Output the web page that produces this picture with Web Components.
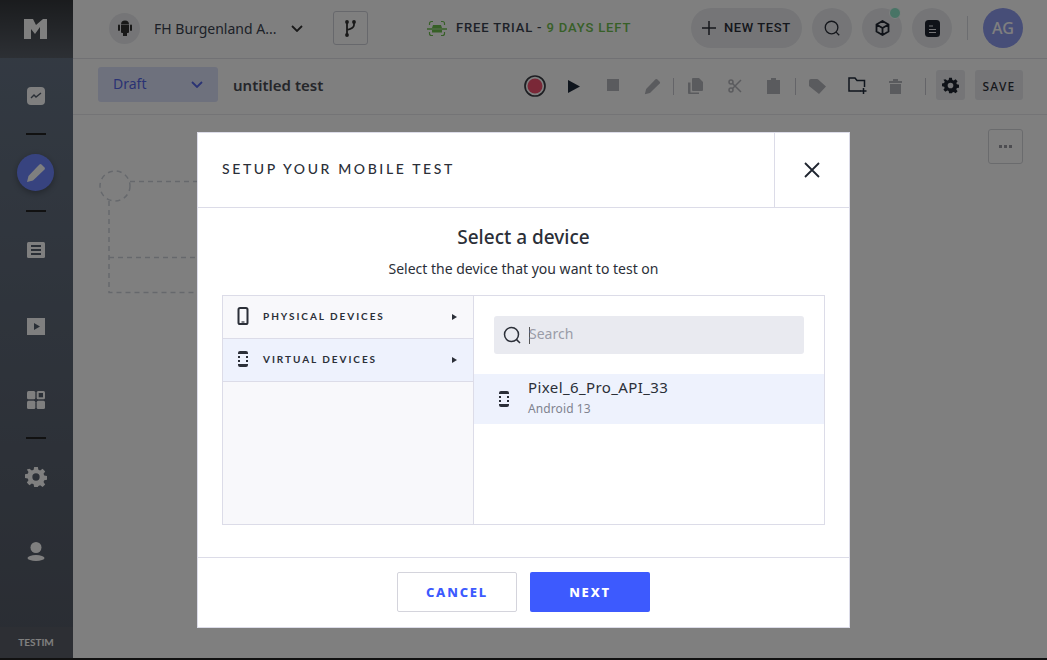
<!DOCTYPE html>
<html>
<head>
<meta charset="utf-8">
<style>
	html, body { margin: 0; height: 100%; overflow: hidden; background: #111; }
	body { font-family: "Lato", "Liberation Sans", sans-serif; }
</style>
</head>
<body>
<app-shell>
	<side-nav slot="nav"></side-nav>
	<top-bar slot="main"></top-bar>
	<test-toolbar slot="main"></test-toolbar>
	<test-canvas slot="main"></test-canvas>
	<setup-modal slot="modal" heading="SETUP YOUR MOBILE TEST">
		<h2-text>Select a device</h2-text>
		<device-picker></device-picker>
	</setup-modal>
</app-shell>

<script>
function define(name, html, connected) {
	customElements.define(name, class extends HTMLElement {
		constructor() {
			super()
			let shadowRoot = this.attachShadow({mode: 'open'})
			let temp = document.createElement("template")
			temp.innerHTML = html
			shadowRoot.appendChild(temp.content.cloneNode(true))
		}
		connectedCallback() {
			if(connected){
				connected.call(this)
			}
		}
	})
}

const PHONE = `<svg width="12" height="18" viewBox="0 0 12 18"><rect x="1.500" y="1" width="9" height="16" rx="1.600" fill="none" stroke="#2b2f38" stroke-width="2"/><rect x="4.500" y="14.400" width="3" height="1.200" fill="#2b2f38"/></svg>`
const VIRTUAL = `<svg width="12" height="18" viewBox="0 0 12 18" fill="#2b2f38"><path d="M1 4V3a2 2 0 0 1 2-2h6a2 2 0 0 1 2 2v1z"/><path d="M1 14v1a2 2 0 0 0 2 2h6a2 2 0 0 0 2-2v-1z"/><rect x="1" y="6" width="2" height="2"/><rect x="9" y="6" width="2" height="2"/><rect x="1" y="10" width="2" height="2"/><rect x="9" y="10" width="2" height="2"/></svg>`
const SEARCH = `<svg width="20" height="20" viewBox="0 0 20 20" fill="none" stroke="#2b2f38" stroke-width="1.500"><circle cx="9.500" cy="9.500" r="7"/><path d="M14.600 14.600l3.400 3.400"/></svg>`
const GEAR = c => `<svg width="22" height="22" viewBox="0 0 24 24" fill="${c}"><path fill-rule="evenodd" d="M10 1h4l.6 3.100 1.900.8L19.200 3.100l2.800 2.800-1.800 2.600.8 1.900 3 .6v4l-3 .6-.8 1.900 1.800 2.600-2.800 2.800-2.700-1.800-1.900.8L14 23h-4l-.6-3.100-1.900-.8-2.700 1.800L2 18.100l1.800-2.600-.8-1.900-3-.6V9l3-.6.8-1.900L2 3.900 4.800 3.100 7.500 4.900l1.900-.8zM12 8a4 4 0 1 0 0 8 4 4 0 0 0 0-8z"/></svg>`

define("app-shell", `
	<style>
		:host { display: flex; width: 1047px; height: 658px; position: relative; background: #fff; overflow: hidden; }
		#main { flex: 1; display: flex; flex-direction: column; min-width: 0; }
		#scrim { position: absolute; inset: 0; background: rgba(0,0,0,.5); display: flex; justify-content: center; align-items: flex-start; padding-top: 132px; box-sizing: border-box; }
	</style>
	<slot name="nav"></slot>
	<div id="main"><slot name="main"></slot></div>
	<div id="scrim"><slot name="modal"></slot></div>
`)

define("side-nav", `
	<style>
		:host { display: flex; flex-direction: column; width: 73px; flex: none; background: linear-gradient(#687688, #545a66); color: #fff; }
		#logo { height: 58px; display: flex; align-items: center; justify-content: center; background: linear-gradient(#35383c, #5a6069); padding-right: 2px; box-sizing: border-box; }
		.item { height: 76px; display: flex; align-items: center; justify-content: center; flex: none; padding-right: 1px; }
		.rule { height: 2px; width: 20px; background: #222; margin: -1px auto 0; flex: none; position: relative; left: -.5px; }
		#pen { width: 37px; height: 37px; margin: -1px 0 0 -1px; border-radius: 50%; background: #6f86ff; display: flex; align-items: center; justify-content: center; box-shadow: 0 2px 6px rgba(0,0,0,.3); }
		#foot { margin-top: auto; height: 30px; display: flex; align-items: center; justify-content: center; font: 700 10px "Lato", sans-serif; color: #fff; background: #5a5e68; padding: 0 1px 1px 0; }
	</style>
	<div id="logo"><svg width="23" height="20" viewBox="0 0 23 20" fill="#fff"><path d="M0 0H9L12 6 19 0H23V20H16V8L11 15 7 10V20H0z"/></svg></div>
	<div class="item"><svg width="18" height="18" viewBox="0 0 18 18"><rect width="18" height="18" rx="4" fill="#fff"/><path d="M4 11l3-3 2 2 5-4" fill="none" stroke="#555f6d" stroke-width="1.400"/></svg></div>
	<div class="rule"></div>
	<div class="item"><div id="pen"><svg width="20" height="20" viewBox="0 0 20 20" fill="#fff"><path d="M1 19l1.500-6L11 4l2.500-2.500a1.500 1.500 0 0 1 2 0l3 3a1.500 1.500 0 0 1 0 2L7 17.500z"/></svg></div></div>
	<div class="rule"></div>
	<div class="item"><svg width="18" height="16" viewBox="0 0 18 16"><rect width="18" height="16" rx="1.500" fill="#fff"/><path d="M4 4h10M4 8h10M4 12h10" stroke="#555f6d" stroke-width="2"/></svg></div>
	<div class="item"><svg width="18" height="17" viewBox="0 0 18 17"><rect width="18" height="17" fill="#fff"/><path d="M7 5l6 3.500-6 3.500z" fill="#555f6d"/></svg></div>
	<div class="item" style="height:74px;box-sizing:border-box;padding-bottom:3px"><svg width="18" height="18" viewBox="0 0 18 18" fill="#fff"><rect width="8.300" height="8.300" rx="1.500"/><rect y="9.700" width="8.300" height="8.300" rx="1.500"/><rect x="9.700" y="9.700" width="8.300" height="8.300" rx="1.500"/><rect x="9.700" width="8.300" height="8.300" rx="1.500"/><rect x="11.700" y="2" width="4.300" height="4.300" fill="#555f6d"/></svg></div>
	<div class="rule"></div>
	<div class="item">${GEAR("#fff")}</div>
	<div class="item" style="height:72px"><svg width="18" height="19" viewBox="0 0 18 19" fill="#fff"><circle cx="9" cy="5.500" r="5.500"/><ellipse cx="9" cy="16" rx="8.500" ry="3"/></svg></div>
	<div id="foot">TESTIM</div>
`)

define("top-bar", `
	<style>
		:host { display: flex; align-items: center; height: 59px; flex: none; box-sizing: border-box; border-bottom: 1px solid #e3e3e8; background: #fff; padding: 0 0 2px 36px; font-family: "Noto Sans", sans-serif; }
		.round { width: 40px; height: 40px; border-radius: 50%; background: #eaebef; display: flex; align-items: center; justify-content: center; flex: none; position: relative; }
		#android { width: 31px; height: 31px; margin-right: 14px; }
		#org { font-size: 14px; color: #3b4350; width: 137px; white-space: nowrap; }
		#branch { width: 35px; height: 34px; box-sizing: border-box; border: 1px solid #ced0d8; border-radius: 3px; margin-left: 30px; display: flex; align-items: center; justify-content: center; }
		#trial { display: flex; align-items: center; gap: 9px; margin-left: 59px; font: 500 13px "Roboto", sans-serif; letter-spacing: .85px; color: #3b4350; white-space: nowrap; width: 264px; }
		#trial span { margin-top: -1px; }
		#trial b { font-weight: 500; color: #6fc04f; }
		#new { display: flex; align-items: center; gap: 8px; height: 40px; width: 111px; box-sizing: border-box; padding-left: 11px; border-radius: 20px; background: #eaebef; font: 500 13px "Roboto", sans-serif; letter-spacing: .6px; color: #2b2f38; white-space: nowrap; margin-right: 10px; }
		#new span { margin-top: -1px; }
		.round + .round { margin-left: 10px; }
		#dot { position: absolute; top: -1px; right: 1px; width: 10px; height: 10px; border-radius: 50%; background: #90e8cc; border: 1px solid #fff; }
		#sep { width: 1px; height: 24px; background: #d9dae0; margin: 0 15px; }
		#avatar { background: #8f9cf0; color: #fff; font: 500 16px "Noto Sans", sans-serif; }
	</style>
	<div class="round" id="android"><svg width="14" height="16" viewBox="0 0 14 16" fill="#333"><path d="M3 5h8v7a1 1 0 0 1-1 1H9v2.500a1 1 0 0 1-2 0V13H7v2.500a1 1 0 0 1-2 0V13H4a1 1 0 0 1-1-1zM3 4.500a4 4 0 0 1 8 0zM0 5.500a1 1 0 0 1 2 0V10a1 1 0 0 1-2 0zM12 5.500a1 1 0 0 1 2 0V10a1 1 0 0 1-2 0z"/></svg></div>
	<div id="org">FH Burgenland A...</div>
	<svg width="12" height="7" viewBox="0 0 12 7" fill="none" stroke="#333" stroke-width="1.800"><path d="M1 1l5 5 5-5"/></svg>
	<div id="branch"><svg width="11" height="17" viewBox="0 0 11 17" fill="#333" stroke="#333" stroke-width="1.800"><path d="M2 2V15M9 2V5C9 8 6 9 2 10" fill="none"/><circle cx="2" cy="2" r="1"/><circle cx="9" cy="2" r="1"/><circle cx="2" cy="15" r="1"/></svg></div>
	<div id="trial">
		<svg width="20" height="17" viewBox="0 0 20 17" fill="none" stroke="#6fc04f" stroke-width="1.200"><path d="M2.500 5V3.500a2 2 0 0 1 2-2H6M14 1.500h1.500a2 2 0 0 1 2 2V5M2.500 12v1.500a2 2 0 0 0 2 2H6M14 15.500h1.500a2 2 0 0 0 2-2V12"/><path d="M0 9h20" stroke-width="1.500"/><path d="M6 5h8l1 3H5zM5 10h10v2.500H5z" fill="#6fc04f" stroke="none"/></svg>
		<span>FREE TRIAL - <b>9 DAYS LEFT</b></span>
	</div>
	<div id="new"><svg width="14" height="14" viewBox="0 0 14 14" stroke="#2b2f38" stroke-width="1.500"><path d="M7 0v14M0 7h14"/></svg><span>NEW TEST</span></div>
	<div class="round">${SEARCH.replace('width="20" height="20"', 'width="18" height="18"')}</div>
	<div class="round"><svg width="15" height="16" viewBox="0 0 15 16" fill="none" stroke="#1f2530" stroke-width="1.800"><path d="M7.500 1l6 3.500v7l-6 3.500-6-3.500v-7zM1.500 4.500l6 3.500 6-3.500M7.500 8v7"/></svg><span id="dot"></span></div>
	<div class="round"><svg width="15" height="17" viewBox="0 0 15 17"><rect width="15" height="17" rx="3.500" fill="#1f2530"/><path d="M4 6h4M4 9.500h7M4 12.500h7" stroke="#eaebef" stroke-width="1.200"/></svg></div>
	<div id="sep"></div>
	<div class="round" id="avatar">AG</div>
`)

define("test-toolbar", `
	<style>
		:host { display: flex; align-items: center; height: 56px; flex: none; box-sizing: border-box; border-bottom: 1px solid #e8e8ec; background: #fff; padding: 0 24px 1px 25px; }
		#status { width: 120px; height: 35px; box-sizing: border-box; margin-top: -4px; background: #dde2fb; border-radius: 3px; display: flex; align-items: center; justify-content: space-between; padding: 0 15px; color: #5566e8; font: 400 14px "Noto Sans", sans-serif; }
		#status span { margin-top: -2px; }
		#name { margin: -3px 0 0 15px; font: 600 15px "Noto Sans", sans-serif; color: #4a4d55; width: 291px; white-space: nowrap; }
		.ic { display: flex; align-items: center; justify-content: center; flex: none; }
		.sep { width: 1px; height: 17px; background: #c8c9d0; flex: none; }
		.btn { height: 30px; margin-top: -2px; border-radius: 3px; background: #eaebef; display: flex; align-items: center; justify-content: center; flex: none; }
		#save { font: 500 12px "Noto Sans", sans-serif; letter-spacing: 1.200px; color: #2b2f38; width: 48px; margin-left: 10px; padding-top: 2px; box-sizing: border-box; }
	</style>
	<div id="status"><span>Draft</span><svg width="12" height="7" viewBox="0 0 12 7" fill="none" stroke="#5566e8" stroke-width="1.800"><path d="M1 1l5 5 5-5"/></svg></div>
	<div id="name">untitled test</div>
	<div class="ic"><svg width="22" height="22" viewBox="0 0 22 22"><circle cx="11" cy="11" r="10" fill="none" stroke="#3a3d44" stroke-width="1.700"/><circle cx="11" cy="11" r="7.500" fill="#f4506e"/></svg></div>
	<div class="ic" style="margin-left:22px"><svg width="12" height="13" viewBox="0 0 12 13" fill="#1f2a3a"><path d="M0 0l12 6.500L0 13z"/></svg></div>
	<div class="ic" style="margin-left:27px;margin-top:-3px"><svg width="12" height="12" viewBox="0 0 12 12"><rect width="12" height="12" fill="#b5b6bc"/></svg></div>
	<div class="ic" style="margin-left:25px"><svg width="17" height="17" viewBox="0 0 20 20" fill="#b5b6bc"><path d="M1 19l1.500-6L11 4l2.500-2.500a1.500 1.500 0 0 1 2 0l3 3a1.500 1.500 0 0 1 0 2L7 17.500z"/></svg></div>
	<div class="sep" style="margin-left:12px"></div>
	<div class="ic" style="margin-left:14px"><svg width="15" height="16" viewBox="0 0 15 16" fill="#b5b6bc"><path d="M5 0h6l4 4v8a1 1 0 0 1-1 1H5a1 1 0 0 1-1-1V1a1 1 0 0 1 1-1z"/><path d="M0 4.500h2.500V14.500H11V16H1a1 1 0 0 1-1-1z"/></svg></div>
	<div class="ic" style="margin-left:25px"><svg width="14" height="14" viewBox="0 0 14 14" fill="none" stroke="#b5b6bc" stroke-width="1.500"><circle cx="3" cy="3" r="2"/><circle cx="3" cy="11" r="2"/><path d="M4.500 4.500L13 13M4.500 9.500L13 1"/></svg></div>
	<div class="ic" style="margin-left:25px"><svg width="13" height="16" viewBox="0 0 13 16" fill="#b5b6bc"><path d="M0 2h4V0h5v2h4v14H0z"/></svg></div>
	<div class="sep" style="margin-left:15px"></div>
	<div class="ic" style="margin-left:13px"><svg width="17" height="15" viewBox="0 0 17 15" fill="#b5b6bc"><path d="M0 7V2a2 2 0 0 1 2-2h6a2 2 0 0 1 1.500.7L17 7.500 10 15z"/></svg></div>
	<div class="ic" style="margin-left:22px"><svg width="20" height="18" viewBox="0 0 20 18" fill="none" stroke="#1f2a3a" stroke-width="1.500"><path d="M13 14H1V1h6l2 2.500h7.500V10"/><path d="M15.500 11v6M12.500 14h6"/></svg></div>
	<div class="ic" style="margin-left:21px"><svg width="13" height="15" viewBox="0 0 13 15" fill="#b5b6bc"><path d="M0 2h4V0h5v2h4v2H0zM1 5h11v10H1z"/></svg></div>
	<div class="sep" style="margin-left:23px"></div>
	<div class="btn" style="width:29px;margin-left:10px">${GEAR("#1f2530").replace('width="22" height="22"', 'width="17" height="17"')}</div>
	<div class="btn" id="save">SAVE</div>
`)

define("test-canvas", `
	<style>
		:host { display: block; flex: 1; position: relative; background: #fff; }
		#more { position: absolute; left: 915px; top: 14px; width: 35px; height: 35px; box-sizing: border-box; border: 1px solid #d5d6db; border-radius: 3px; display: flex; align-items: center; justify-content: center; gap: 2px; }
		#more i { width: 3px; height: 3px; background: #9a9ba2; }
		svg { position: absolute; left: 0; top: 0; }
	</style>
	<svg width="300" height="200" fill="none" stroke="#ccd1d9" stroke-width="1.500" stroke-dasharray="5 4">
		<circle cx="42" cy="71" r="15"/>
		<path d="M57 66.500H140M36 86V177.500H140M36 142.500H140"/>
	</svg>
	<div id="more"><i></i><i></i><i></i></div>
`)

define("setup-modal", `
	<style>
		:host { display: flex; flex-direction: column; width: 653px; height: 496px; box-sizing: border-box; background: #fff; border: 1px solid #dcdce8; flex: none; color: #2b2f38; }
		header { display: flex; height: 75px; flex: none; border-bottom: 1px solid #dcdce8; box-sizing: border-box; }
		#title { flex: 1; display: flex; align-items: center; padding-left: 24px; font: 500 14px "Lato", sans-serif; letter-spacing: 2.600px; padding-bottom: 4px; box-sizing: border-box; white-space: nowrap; }
		#close { width: 75px; box-sizing: border-box; border-left: 1px solid #dcdce8; display: flex; align-items: center; justify-content: center; flex: none; }
		#body { flex: 1; display: flex; flex-direction: column; align-items: center; padding: 0 24px; }
		footer { height: 70px; flex: none; border-top: 1px solid #dcdce8; display: flex; justify-content: center; align-items: center; gap: 13px; padding-bottom: 1px; box-sizing: border-box; }
		button { width: 120px; height: 40px; border-radius: 2px; font: 800 13px "Noto Sans", sans-serif; letter-spacing: 1.800px; box-sizing: border-box; padding: 0; }
		#cancel { background: #fff; color: #3d5afe; border: 1px solid #d4d4dc; }
		#next { background: #3d5afe; color: #fff; border: 0; }
	</style>
	<header>
		<div id="title"></div>
		<div id="close"><svg width="16" height="16" viewBox="0 0 16 16" stroke="#1f2530" stroke-width="1.800"><path d="M1 1l14 14M15 1L1 15"/></svg></div>
	</header>
	<div id="body"><slot></slot></div>
	<footer><button id="cancel">CANCEL</button><button id="next">NEXT</button></footer>
`, function(){
	this.shadowRoot.getElementById("title").textContent = this.getAttribute("heading")
})

define("h2-text", `
	<style>
		:host { display: block; text-align: center; margin-top: 17px; font: 500 19px/24px "Noto Sans", sans-serif; color: #2b2f38; }
		#sub { font: 400 14px/20px "Noto Sans", sans-serif; margin-top: 10px; }
	</style>
	<slot></slot>
	<div id="sub">Select the device that you want to test on</div>
`)

define("device-category", `
	<style>
		:host { display: flex; align-items: center; height: 43px; box-sizing: border-box; border-bottom: 1px solid #dcdce8; padding: 0 16px 0 14px; font: 700 10px "Lato", sans-serif; letter-spacing: 1.950px; color: #2b2f38; }
		:host([active]) { background: #eef2fd; }
		#label { flex: 1; margin-left: 14px; margin-top: -3px; }
		#icon { width: 12px; display: flex; }
		#arrow { width: 0; height: 0; border-left: 5px solid #2b2f38; border-top: 3px solid transparent; border-bottom: 3px solid transparent; }
	</style>
	<span id="icon"><slot name="icon"></slot></span>
	<span id="label"><slot></slot></span>
	<span id="arrow"></span>
`)

define("device-picker", `
	<style>
		:host { display: flex; width: 603px; height: 230px; box-sizing: border-box; margin-top: 16px; border: 1px solid #dcdce8; align-self: stretch; }
		#left { width: 251px; box-sizing: border-box; flex: none; background: #f8f8fb; border-right: 1px solid #dcdce8; }
		#right { flex: 1; min-width: 0; }
		#search { margin: 20px 20px 20px 20px; height: 38px; border-radius: 3px; background: #e9eaf0; display: flex; align-items: center; padding-left: 8px; gap: 7px; color: #9a9ca8; font: 400 14px "Noto Sans", sans-serif; }
		#search span:last-child { margin-top: -3px; }
		#caret { width: 1px; height: 17px; background: #555; margin-right: -8px; }
		#row { height: 50px; background: #eef2fd; display: flex; align-items: center; padding-left: 24px; gap: 18px; }
		#dev { font: 400 15px/18px "Noto Sans", sans-serif; letter-spacing: .4px; color: #2b2f38; margin-top: -4px; }
		#dev small { display: block; font-size: 12px; line-height: 17px; letter-spacing: .1px; color: #80838f; margin-top: 4px; }
		svg { flex: none; }
	</style>
	<div id="left">
		<device-category><span slot="icon">${PHONE}</span>PHYSICAL DEVICES</device-category>
		<device-category active><span slot="icon">${VIRTUAL}</span>VIRTUAL DEVICES</device-category>
	</div>
	<div id="right">
		<div id="search">${SEARCH}<span id="caret"></span><span>Search</span></div>
		<div id="row">${VIRTUAL}<div id="dev">Pixel_6_Pro_API_33<small>Android 13</small></div></div>
	</div>
`)
</script>
</body>
</html>
